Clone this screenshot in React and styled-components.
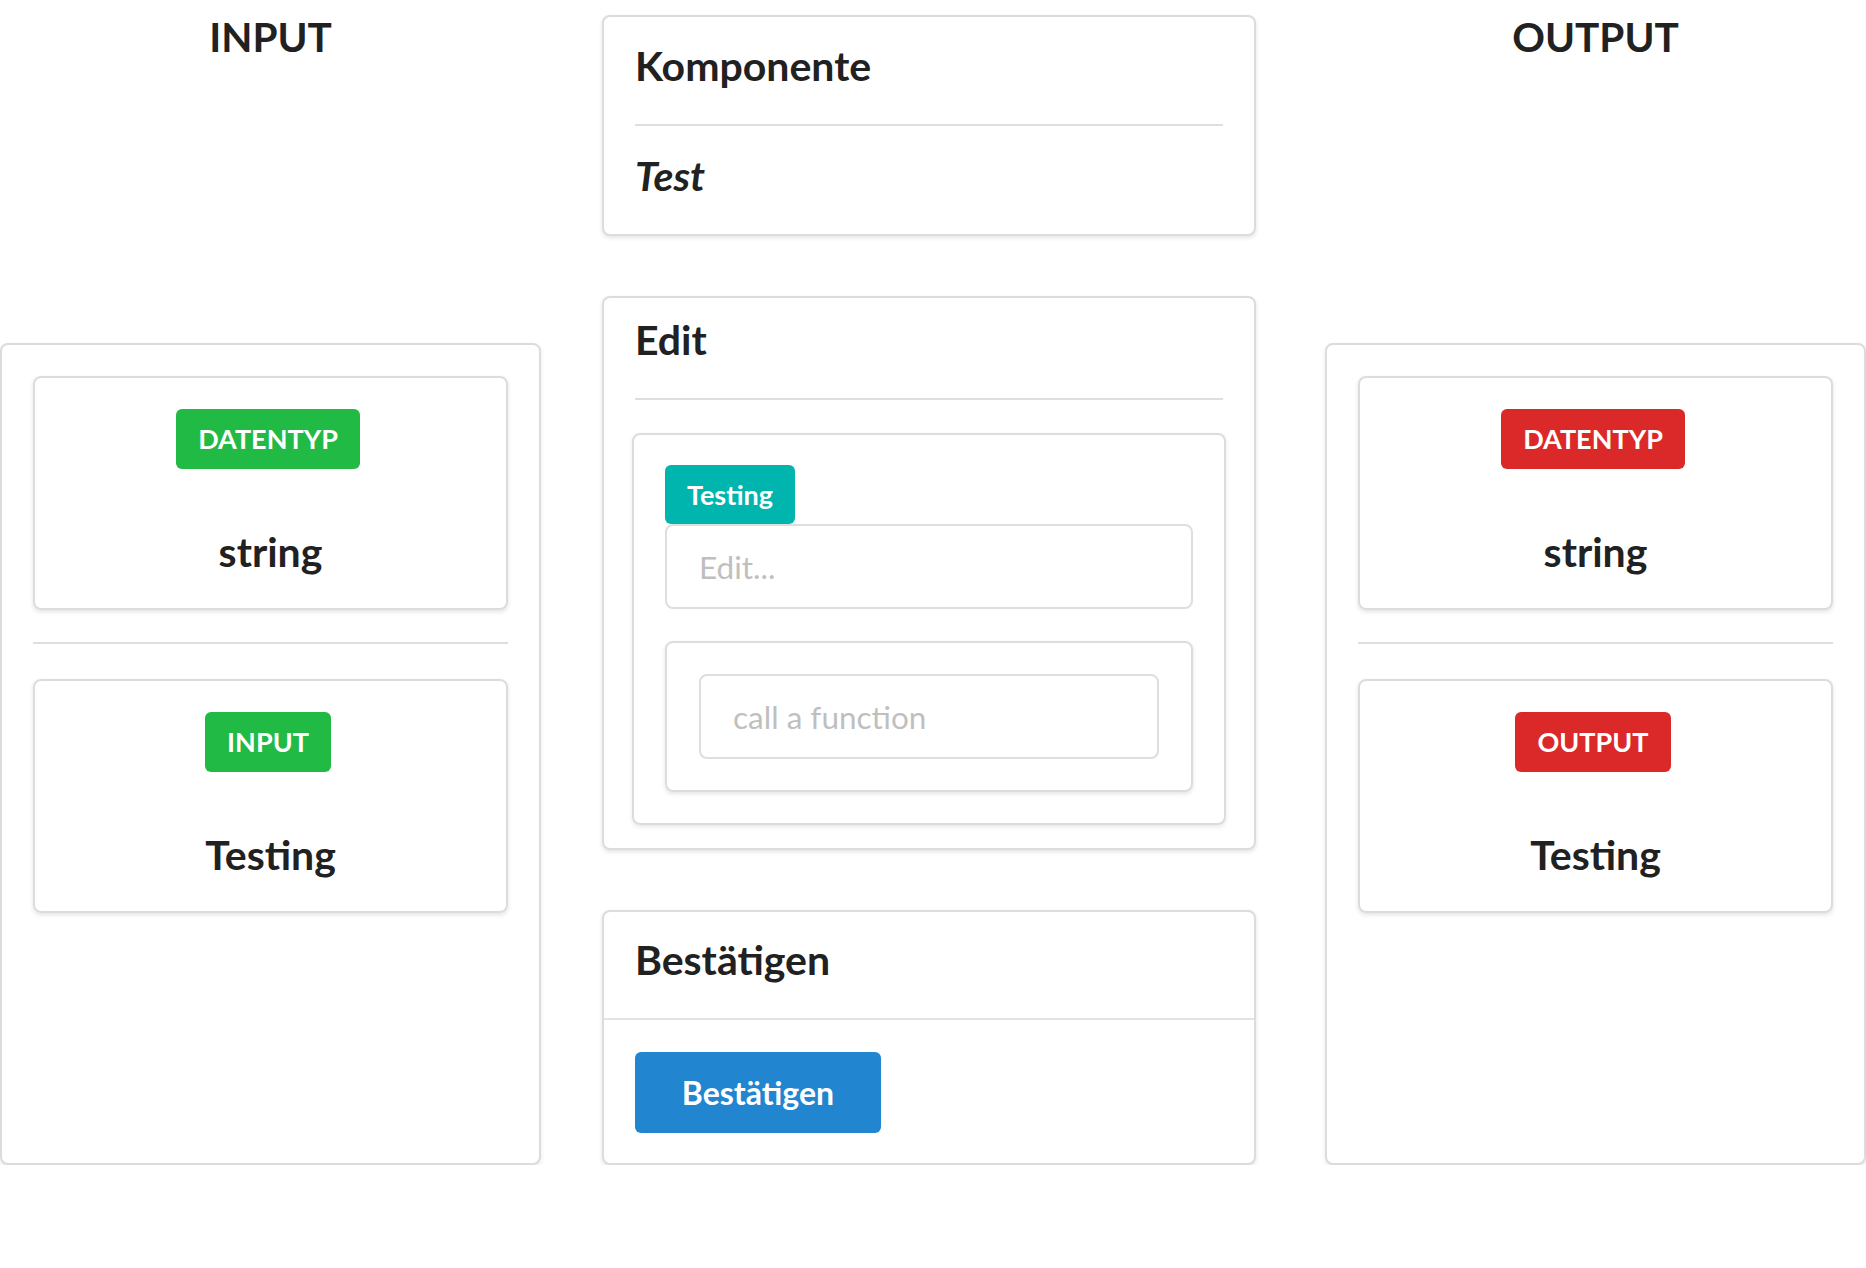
import React from 'react'
import styled, { createGlobalStyle } from 'styled-components'

const GlobalStyle = createGlobalStyle`
  html, body {
    margin: 0;
    padding: 0;
    background: #fff;
  }
  body {
    font-family: Lato, 'Open Sans', sans-serif;
    color: #212121;
  }
  * {
    box-sizing: border-box;
  }
`

const sides = {
  input: {
    title: 'INPUT',
    color: '#21ba45',
    items: [
      { tag: 'DATENTYP', value: 'string' },
      { tag: 'INPUT', value: 'Testing' }
    ]
  },
  output: {
    title: 'OUTPUT',
    color: '#db2828',
    items: [
      { tag: 'DATENTYP', value: 'string' },
      { tag: 'OUTPUT', value: 'Testing' }
    ]
  }
}

const SidePanel = ({ side, offset }) => (
  <SideColumn $offset={offset}>
    <SideHeading>{side.title}</SideHeading>
    <Panel>
      {side.items.map((item, i) => (
        <React.Fragment key={item.tag}>
          {i > 0 && <Divider $after={35} />}
          <ItemCard>
            <Tag $color={side.color}>{item.tag}</Tag>
            <ItemValue>{item.value}</ItemValue>
          </ItemCard>
        </React.Fragment>
      ))}
    </Panel>
  </SideColumn>
)

const App = () => {
  return (
    <>
      <GlobalStyle />
      <Page>
        <SidePanel side={sides.input} offset={0} />
        <CenterColumn>
          <Segment $pt={23} $pb={32}>
            <SegmentTitle>Komponente</SegmentTitle>
            <Divider $after={24} />
            <SegmentTitle as='p' $italic>
              Test
            </SegmentTitle>
          </Segment>

          <Segment $pt={16} $pb={23}>
            <SegmentTitle>Edit</SegmentTitle>
            <Divider />
            <InnerCard>
              <AttachedTag>Testing</AttachedTag>
              <TextInput type='text' placeholder='Edit...' />
              <FieldBox>
                <TextInput type='text' placeholder='call a function' />
              </FieldBox>
            </InnerCard>
          </Segment>

          <Segment $pt={22} $pb={30}>
            <SegmentTitle>Bestätigen</SegmentTitle>
            <FullDivider />
            <PrimaryButton>Bestätigen</PrimaryButton>
          </Segment>
        </CenterColumn>
        <SidePanel side={sides.output} offset={69} />
      </Page>
    </>
  )
}

export default App

//styles

const Page = styled.div`
  display: flex;
  align-items: stretch;
  width: 1866px;
`
const SideColumn = styled.div`
  display: flex;
  flex-direction: column;
  width: 541px;
  flex-shrink: 0;
  margin-left: ${p => p.$offset}px;
`
const SideHeading = styled.h1`
  margin: 11px 0 0;
  font-size: 40.5px;
  line-height: 52px;
  font-weight: 700;
  text-align: center;
`
const Panel = styled.div`
  flex: 1;
  margin-top: 280px;
  padding: 31px 31px;
  border: 2px solid #dcdcdd;
  border-radius: 8px;
  box-shadow: 0 2px 4px rgba(34, 36, 38, 0.1);
  background: #fff;
`
const ItemCard = styled.div`
  display: flex;
  flex-direction: column;
  align-items: center;
  padding: 31px 0 30px;
  border: 2px solid #dcdcdd;
  border-radius: 8px;
  box-shadow: 0 2px 4px rgba(34, 36, 38, 0.12);
`
const Tag = styled.span`
  display: inline-block;
  margin-right: 5px;
  padding: 16px 22px 17px;
  font-size: 27px;
  line-height: 27px;
  font-weight: 700;
  color: #fff;
  background: ${p => p.$color};
  border-radius: 6px;
`
const ItemValue = styled.div`
  margin-top: 57px;
  font-size: 41px;
  line-height: 52px;
  font-weight: 700;
`
const Divider = styled.div`
  height: 2px;
  background: #dedede;
  margin: 32px 0 ${p => p.$after || 33}px;
`
const FullDivider = styled.div`
  height: 2px;
  background: #e3e3e3;
  margin: 32px -31px 32px;
`
const CenterColumn = styled.div`
  display: flex;
  flex-direction: column;
  gap: 60px;
  width: 654px;
  flex-shrink: 0;
  margin-left: 61px;
  padding-top: 15px;
`
const Segment = styled.div`
  padding: ${p => p.$pt}px 31px ${p => p.$pb}px;
  border: 2px solid #dcdcdd;
  border-radius: 8px;
  box-shadow: 0 2px 4px rgba(34, 36, 38, 0.12);
  background: #fff;
`
const SegmentTitle = styled.h2`
  margin: 0;
  font-size: 41px;
  line-height: 52px;
  font-weight: 700;
  font-style: ${p => (p.$italic ? 'italic' : 'normal')};
`
const InnerCard = styled.div`
  display: flex;
  flex-direction: column;
  align-items: flex-start;
  margin: 0 -3px;
  padding: 30px 31px 31px;
  border: 2px solid #dcdcdd;
  border-radius: 8px;
  box-shadow: 0 2px 4px rgba(34, 36, 38, 0.1);
`
const AttachedTag = styled.span`
  display: inline-block;
  padding: 16px 22px 16px;
  font-size: 27px;
  line-height: 27px;
  font-weight: 700;
  color: #fff;
  background: #00b5ad;
  border-radius: 6px;
`
const TextInput = styled.input`
  display: block;
  width: 100%;
  height: 85px;
  padding: 0 32px;
  font-family: Lato, 'Open Sans', sans-serif;
  font-size: 31.5px;
  color: #212121;
  border: 2px solid #dedede;
  border-radius: 8px;
  outline: none;
  background: #fff;
  &::placeholder {
    color: #bfbfbf;
  }
`
const FieldBox = styled.div`
  width: 100%;
  margin-top: 32px;
  padding: 31px 32px;
  border: 2px solid #dcdcdd;
  border-radius: 8px;
  box-shadow: 0 2px 4px rgba(34, 36, 38, 0.12);
`
const PrimaryButton = styled.button`
  display: inline-block;
  width: 246px;
  height: 81px;
  padding: 0;
  font-family: Lato, 'Open Sans', sans-serif;
  font-size: 32px;
  font-weight: 700;
  color: #fff;
  background: #2185d0;
  border: none;
  border-radius: 6px;
  cursor: pointer;
`
